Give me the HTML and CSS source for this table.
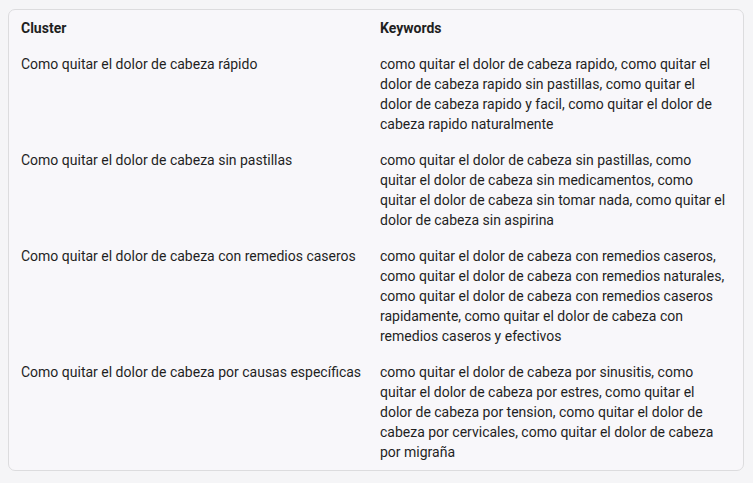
FILE: index.html
```html
<!DOCTYPE html>
<html lang="es">
<head>
<meta charset="utf-8">
<link rel="stylesheet" href="styles.css">
</head>
<body>
<div class="card">
  <div class="table">
    <div class="cell head">Cluster</div>
    <div class="cell head">Keywords</div>

    <div class="cell">Como quitar el dolor de cabeza rápido</div>
    <div class="cell">como quitar el dolor de cabeza rapido, como quitar el dolor de cabeza rapido sin pastillas, como quitar el dolor de cabeza rapido y facil, como quitar el dolor de cabeza rapido naturalmente</div>

    <div class="cell">Como quitar el dolor de cabeza sin pastillas</div>
    <div class="cell">como quitar el dolor de cabeza sin pastillas, como quitar el dolor de cabeza sin medicamentos, como quitar el dolor de cabeza sin tomar nada, como quitar el dolor de cabeza sin aspirina</div>

    <div class="cell">Como quitar el dolor de cabeza con remedios caseros</div>
    <div class="cell">como quitar el dolor de cabeza con remedios caseros, como quitar el dolor de cabeza con remedios naturales, como quitar el dolor de cabeza con remedios caseros rapidamente, como quitar el dolor de cabeza con remedios caseros y efectivos</div>

    <div class="cell">Como quitar el dolor de cabeza por causas específicas</div>
    <div class="cell">como quitar el dolor de cabeza por sinusitis, como quitar el dolor de cabeza por estres, como quitar el dolor de cabeza por tension, como quitar el dolor de cabeza por cervicales, como quitar el dolor de cabeza por migraña</div>
  </div>
</div>
</body>
</html>
```
FILE: styles.css
```css
html, body {
  margin: 0;
  background: #f5f5f7;
}
body {
  padding: 9px 9px 0 8px;
  font-family: Roboto, "Liberation Sans", sans-serif;
  font-size: 14px;
  line-height: 20px;
  color: #1f1f1f;
}
.card {
  background: #f8f7fa;
  border: 1px solid #dcdcde;
  border-radius: 7px;
  padding: 0;
}
.table {
  display: grid;
  grid-template-columns: 359px 1fr;
}
.cell {
  padding: 8px 15px 8px 12px;
}
.cell:nth-child(odd) {
  padding-right: 4px;
}
.head {
  font-weight: 700;
}
```
